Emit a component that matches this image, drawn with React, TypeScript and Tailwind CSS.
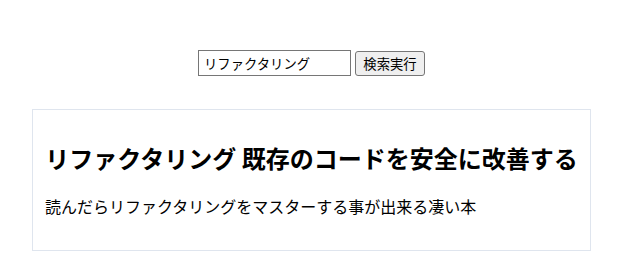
export default function App() {
  const font = { fontFamily: '"Noto Sans CJK JP", "Noto Sans", sans-serif' };
  return (
    <div className="bg-white text-black" style={font}>
      <form
        className="flex justify-center gap-1 pt-[50px]"
        onSubmit={(e) => e.preventDefault()}
      >
        <input
          type="text"
          defaultValue="リファクタリング"
          className="h-[26px] w-[153px] border border-[#767676] bg-white px-[5px] text-[13.33px] leading-none"
        />
        <button
          type="submit"
          className="mt-px h-[25px] w-[70px] rounded-[3px] border border-[#767676] bg-[#efefef] text-[13.33px] leading-none"
        >
          検索実行
        </button>
      </form>
      <div className="mx-8 mt-[33px] border border-[#dfe5ee] p-3">
        <h2 className="mt-[18px] mb-5 text-center text-2xl font-bold leading-[35px]">
          リファクタリング 既存のコードを安全に改善する
        </h2>
        <p className="mt-4 mb-5 text-base leading-[23px]">
          読んだらリファクタリングをマスターする事が出来る凄い本
        </p>
      </div>
    </div>
  );
}
